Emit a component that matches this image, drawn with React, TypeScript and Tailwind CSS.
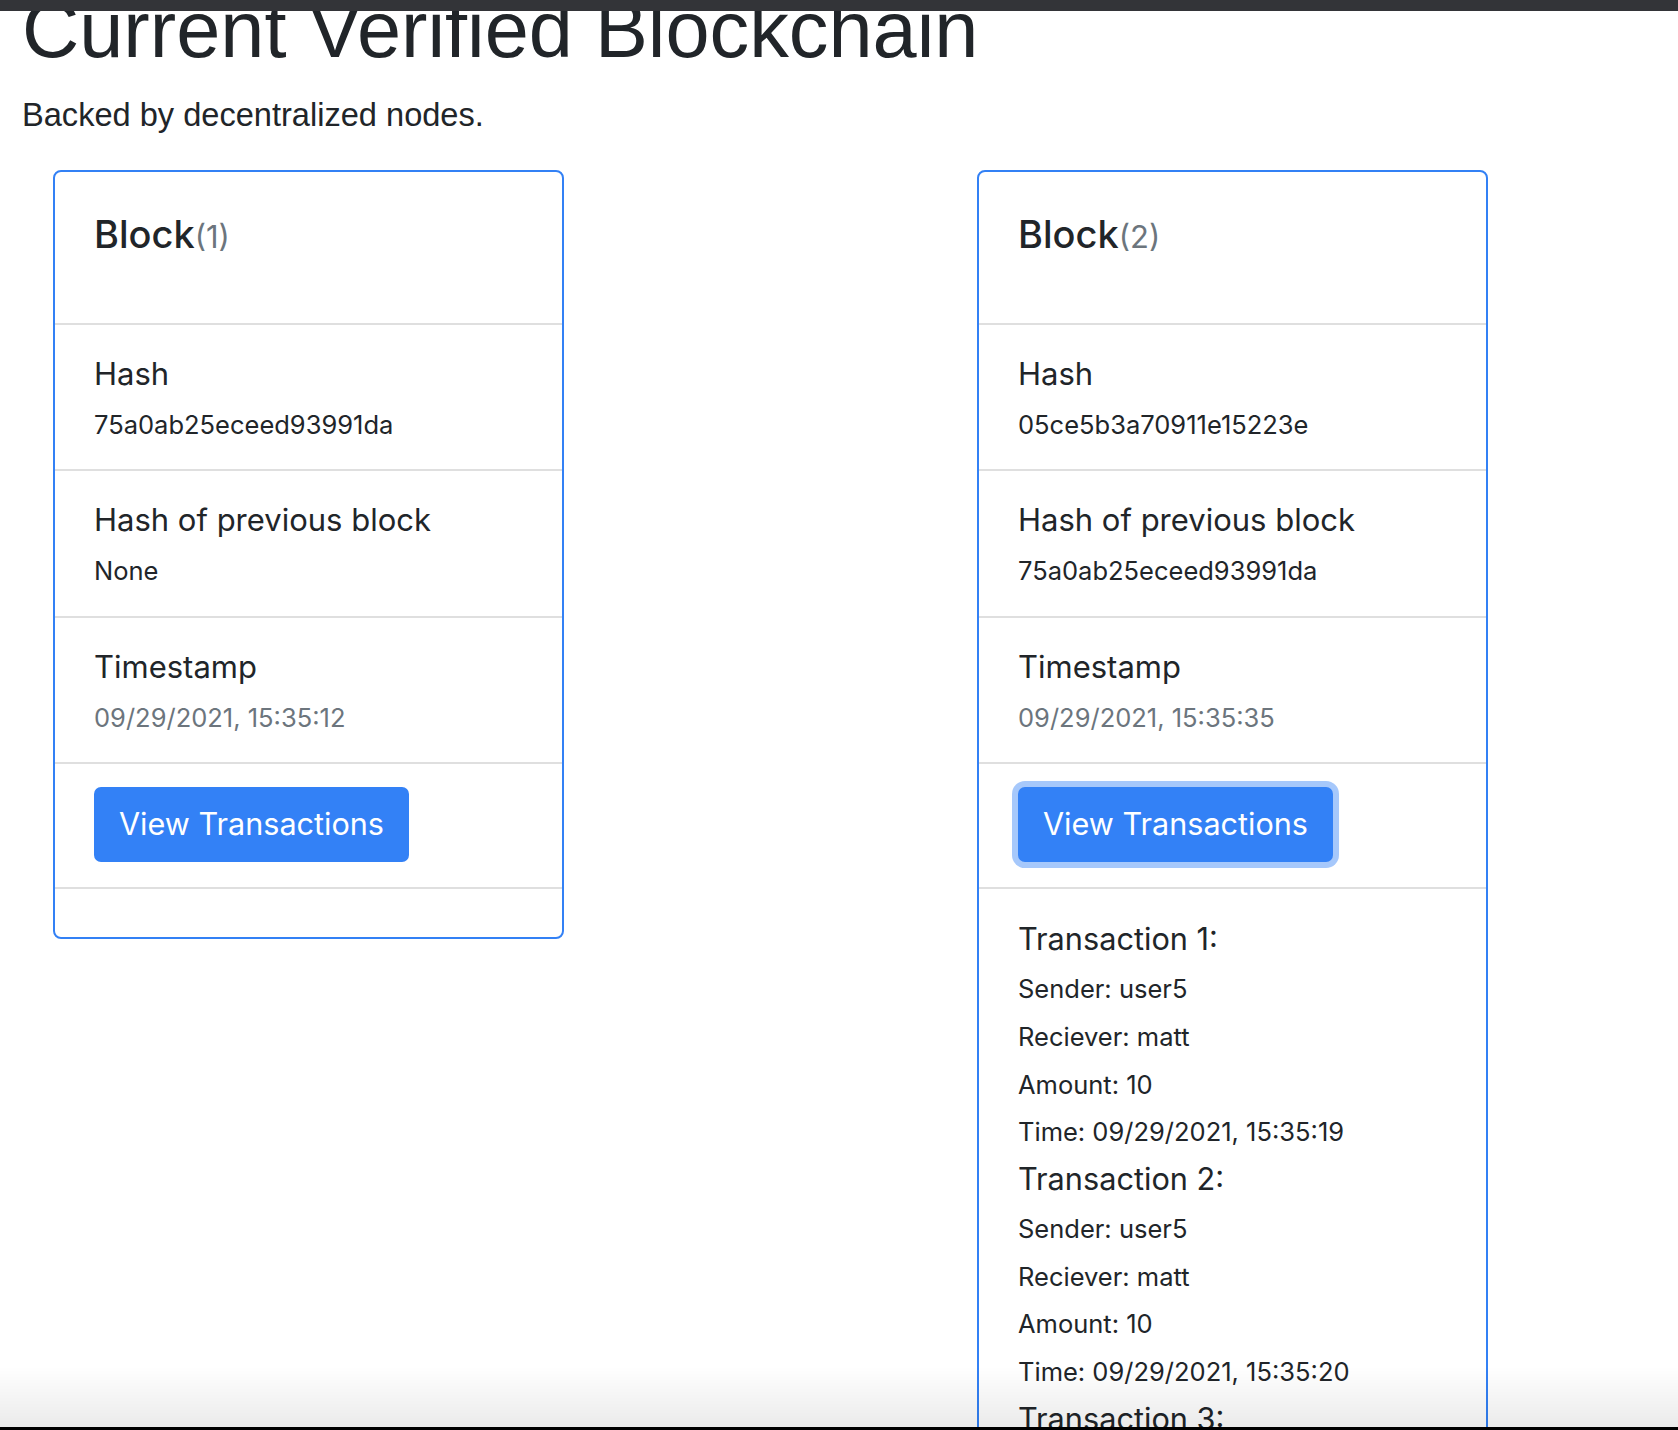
import React from 'react';

type Tx = { sender: string; receiver: string; amount: number; time: string };
type Block = {
  index: number;
  hash: string;
  prevHash: string;
  timestamp: string;
  open: boolean;
  transactions: Tx[];
};

const blocks: Block[] = [
  {
    index: 1,
    hash: '75a0ab25eceed93991da',
    prevHash: 'None',
    timestamp: '09/29/2021, 15:35:12',
    open: false,
    transactions: [],
  },
  {
    index: 2,
    hash: '05ce5b3a70911e15223e',
    prevHash: '75a0ab25eceed93991da',
    timestamp: '09/29/2021, 15:35:35',
    open: true,
    transactions: [
      { sender: 'user5', receiver: 'matt', amount: 10, time: '09/29/2021, 15:35:19' },
      { sender: 'user5', receiver: 'matt', amount: 10, time: '09/29/2021, 15:35:20' },
      { sender: 'user5', receiver: 'matt', amount: 10, time: '09/29/2021, 15:35:21' },
    ],
  },
];

const Field = ({ label, value, muted }: { label: string; value: string; muted?: boolean }) => (
  <li className="border-t-2 border-[#dfdfdf] px-[39px] pt-[24px] pb-[19.3px]">
    <div className="text-[31px] leading-[50px]">{label}</div>
    <div className={muted ? 'text-[25.5px] leading-[51px] text-[#6c757d]' : 'text-[25.5px] leading-[51px]'}>{value}</div>
  </li>
);

const BlockCard = ({ block }: { block: Block }) => (
  <div className="w-[511px] shrink-0 rounded-[8px] border-2 border-[#3381f5] bg-white">
    <ul>
      {/* Card title */}
      <li className="px-[39px] pt-[38px] pb-[62px]">
        <span className="text-[38px] leading-[48px] font-medium">Block</span>
        <span className="text-[31px] leading-[48px] text-[#6c757d]">({block.index})</span>
      </li>
      <Field label="Hash" value={block.hash} />
      <Field label="Hash of previous block" value={block.prevHash} />
      <Field label="Timestamp" value={block.timestamp} muted />

      <li className="border-t-2 border-[#dfdfdf] px-[39px] pt-[23px] pb-[25px]">
        <button
          className={
            block.open
              ? 'h-[75px] px-[25px] rounded-[7px] bg-[#3381f6] text-white text-[30.6px] ring-[6px] ring-[#a6c8fb]'
              : 'h-[75px] px-[25px] rounded-[7px] bg-[#3381f6] text-white text-[30.6px]'
          }
        >
          View Transactions
        </button>
      </li>

      {block.open ? (
        <li className="border-t-2 border-[#dfdfdf] px-[39px] pt-[27px] pb-[24px]">
          {block.transactions.map((tx, i) => (
            <div key={i}>
              <div className="text-[30.7px] leading-[46px] pb-[3.5px]">Transaction {i + 1}:</div>
              <div className="text-[25.5px] leading-[47.6px]">Sender: {tx.sender}</div>
              <div className="text-[25.5px] leading-[47.6px]">Reciever: {tx.receiver}</div>
              <div className="text-[25.5px] leading-[47.6px]">Amount: {tx.amount}</div>
              <div className="text-[25.5px] leading-[47.6px]">Time: {tx.time}</div>
            </div>
          ))}
        </li>
      ) : (
        <li className="border-t-2 border-[#dfdfdf] h-[50px]" />
      )}
    </ul>
  </div>
);

export default function App() {
  return (
    <div className="min-h-screen bg-white text-[#212529] font-['Inter',sans-serif] overflow-hidden">
      {/* browser chrome strip on top */}
      <div className="fixed top-0 left-0 right-0 h-[11px] bg-[#333438] z-20" />

      <div className="pl-[22px]">
        <h1 className="mt-[-9px] text-[79.3px] leading-[78px] font-['Liberation_Sans',Arial,sans-serif]">
          Current Verified Blockchain
        </h1>
        <p className="mt-[26px] text-[32.6px] leading-[40px] font-['Liberation_Sans',Arial,sans-serif]">
          Backed by decentralized nodes.
        </p>
      </div>

      <div className="flex items-start gap-[413px] pl-[53px] mt-[35px]">
        {blocks.map((b) => (
          <BlockCard key={b.index} block={b} />
        ))}
      </div>

      {/* bottom window shadow */}
      <div className="fixed bottom-[3px] left-0 right-0 h-[60px] bg-gradient-to-b from-transparent to-black/[0.08] z-20" />
      <div className="fixed bottom-0 left-0 right-0 h-[3px] bg-black z-20" />
    </div>
  );
}
